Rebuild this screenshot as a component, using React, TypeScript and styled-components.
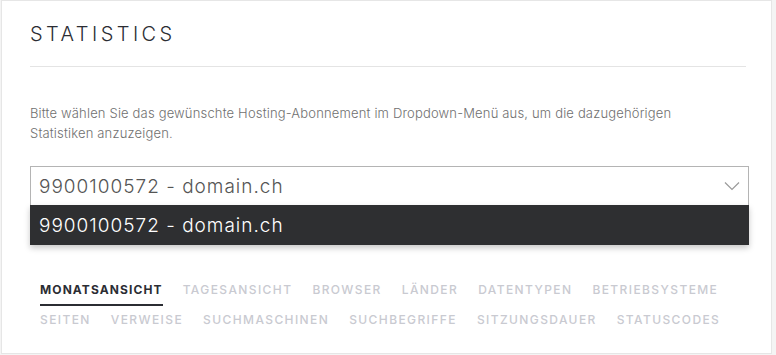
import styled, { createGlobalStyle } from "styled-components";

const GlobalStyle = createGlobalStyle`
   html, body {
      margin: 0;
      padding: 0;
      background: #f4f4f4;
   }
   body {
      font-family: Inter, "Noto Sans", sans-serif;
   }
`;

const tabsRow1 = ["Monatsansicht", "Tagesansicht", "Browser", "Länder", "Datentypen", "Betriebsysteme"];
const tabsRow2 = ["Seiten", "Verweise", "Suchmaschinen", "Suchbegriffe", "Sitzungsdauer", "Statuscodes"];

const ChevronDown = () => (
   <svg width="16" height="10" viewBox="0 0 16 10" fill="none">
      <path d="M1 1.5 L8 8.5 L15 1.5" stroke="#9a9a9a" strokeWidth="1.2" />
   </svg>
);

export default function App() {
   return (
      <>
         <GlobalStyle />
         <Panel>
            <Title>Statistics</Title>
            <Divider />
            <Intro>
               Bitte wählen Sie das gewünschte Hosting-Abonnement im Dropdown-Menü aus, um die dazugehörigen
               Statistiken anzuzeigen.
            </Intro>
            <SelectWrap>
               <SelectBox>
                  <span>9900100572 - domain.ch</span>
                  <ChevronDown />
               </SelectBox>
               <OptionList>
                  <Option>9900100572 - domain.ch</Option>
               </OptionList>
            </SelectWrap>
            <Tabs>
               <TabRow>
                  {tabsRow1.map((t, i) => (
                     <Tab key={t} $active={i === 0}>
                        {t}
                     </Tab>
                  ))}
               </TabRow>
               <TabRow>
                  {tabsRow2.map((t) => (
                     <Tab key={t}>{t}</Tab>
                  ))}
               </TabRow>
            </Tabs>
         </Panel>
      </>
   );
}

const Panel = styled.div`
   box-sizing: border-box;
   width: 771px;
   height: 354px;
   margin-left: 1px;
   background: #fff;
   border: 1px solid #e6e6e6;
   padding: 0 22px 0 28px;
`;

const Title = styled.h1`
   margin: 0;
   padding-top: 21px;
   font-size: 20px;
   font-weight: 300;
   line-height: 24px;
   letter-spacing: 3.45px;
   text-transform: uppercase;
   color: #2b2d33;
`;

const Divider = styled.div`
   height: 1px;
   background: #e4e4e4;
   margin: 20px 3px 0 0;
`;

const Intro = styled.p`
   margin: 36px 0 0;
   max-width: 700px;
   font-size: 13px;
   font-weight: 300;
   line-height: 20px;
   letter-spacing: 0.17px;
   color: #707070;
`;

const SelectWrap = styled.div`
   position: relative;
   margin-top: 23px;
`;

const SelectBox = styled.div`
   box-sizing: border-box;
   height: 40px;
   border: 1px solid #b4b4b4;
   display: flex;
   align-items: center;
   justify-content: space-between;
   padding: 0 8px 0 8px;
   font-size: 19px;
   font-weight: 300;
   letter-spacing: 1px;
   color: #555;
`;

const OptionList = styled.div`
   position: absolute;
   left: 0;
   right: 0;
   top: 39px;
   background: #2e2f31;
   box-shadow: 0 3px 6px rgba(0, 0, 0, 0.22);
`;

const Option = styled.div`
   height: 40px;
   display: flex;
   align-items: center;
   padding: 0 9px;
   font-size: 19px;
   font-weight: 300;
   letter-spacing: 1px;
   color: #fff;
`;

const Tabs = styled.div`
   margin-top: 73px;
   padding-left: 10px;
   display: flex;
   flex-direction: column;
   gap: 3px;
`;

const TabRow = styled.div`
   display: flex;
   gap: 20px;
`;

const Tab = styled.span<{ $active?: boolean }>`
   font-size: 12px;
   font-weight: ${(p) => (p.$active ? 700 : 500)};
   letter-spacing: ${(p) => (p.$active ? "1.1px" : "1.4px")};
   text-transform: uppercase;
   line-height: 22px;
   padding-bottom: 3px;
   color: ${(p) => (p.$active ? "#2b2d33" : "#c9cad1")};
   border-bottom: 2px solid ${(p) => (p.$active ? "#2b2d33" : "transparent")};
`;
